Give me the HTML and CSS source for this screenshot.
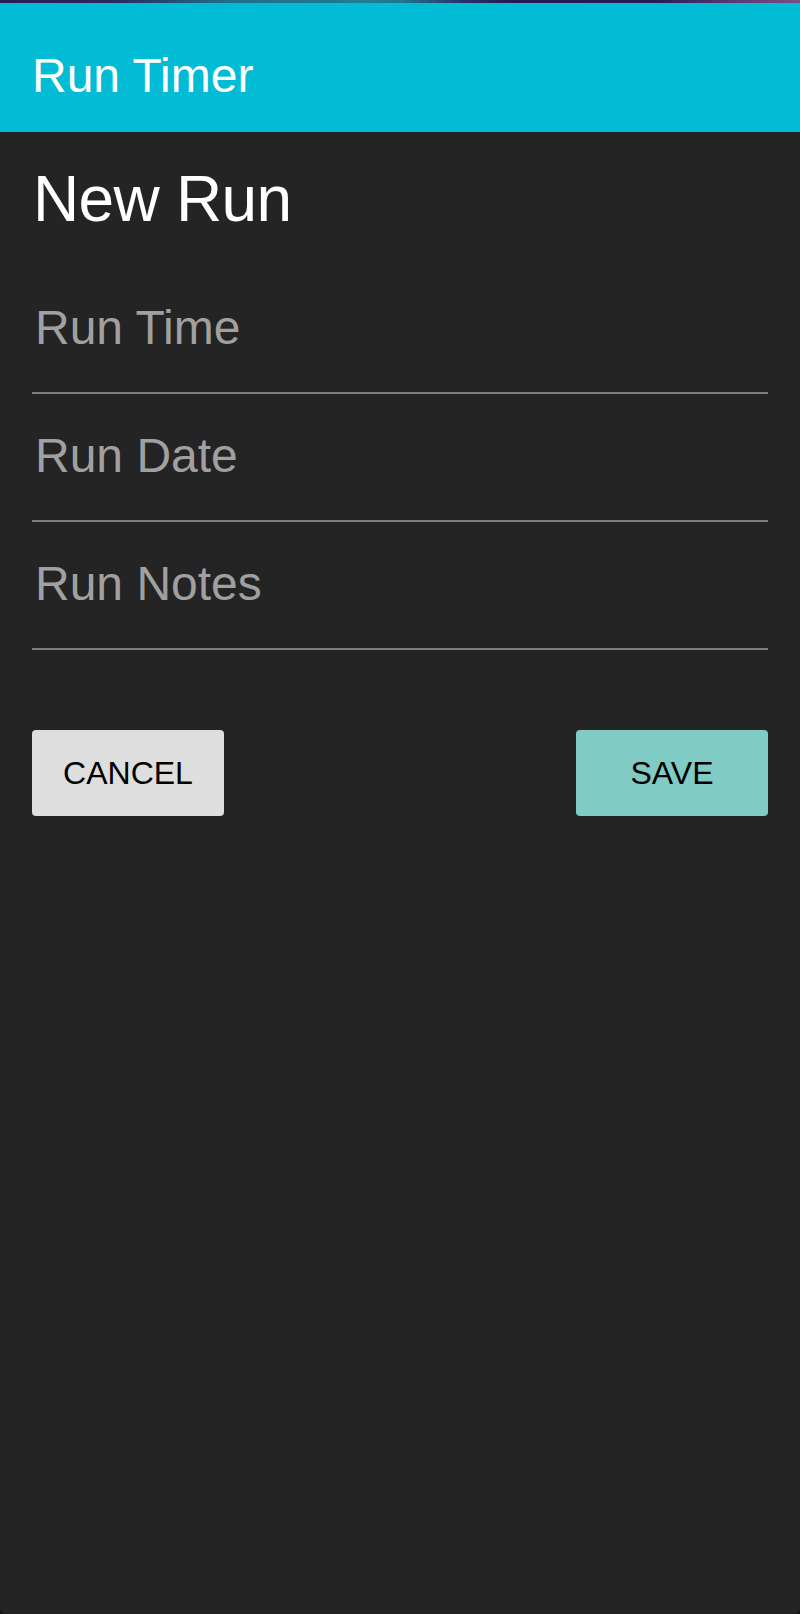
FILE: index.html
```html
<!DOCTYPE html>
<html lang="en">
<head>
<meta charset="utf-8">
<title>Run Timer</title>
<link rel="stylesheet" href="styles.css">
</head>
<body>
<div class="screen">
  <div class="status-strip"></div>
  <header class="toolbar">
    <div class="toolbar-title">Run Timer</div>
  </header>
  <main class="content">
    <h1 class="page-title">New Run</h1>
    <form class="run-form">
      <input class="field" type="text" placeholder="Run Time">
      <input class="field" type="text" placeholder="Run Date">
      <input class="field" type="text" placeholder="Run Notes">
      <div class="actions">
        <button type="button" class="btn btn-cancel">CANCEL</button>
        <button type="button" class="btn btn-save">SAVE</button>
      </div>
    </form>
  </main>
</div>
</body>
</html>
```
FILE: styles.css
```css
html, body {
  margin: 0;
  padding: 0;
  background: #15100e;
}
body {
  font-family: "Liberation Sans", Arial, Helvetica, sans-serif;
}
.screen {
  height: 1614px;
  background: #242424;
  border-radius: 0 0 6px 6px;
  overflow: hidden;
  display: flex;
  flex-direction: column;
}
.status-strip {
  height: 3px;
  flex: none;
  background: linear-gradient(to right, #2a1d56 0%, #28285c 14%, #1f6e8a 28%, #1f7b93 45%, #1f7890 50%, #25306a 58%, #231c54 64%, #261d56 82%, #5a3a75 92%, #7a5088 100%);
}
.toolbar {
  flex: none;
  height: 129px;
  box-sizing: border-box;
  padding: 45px 32px 0;
  background: #02bbd5;
}
.toolbar-title {
  color: #ffffff;
  font-size: 48px;
  line-height: 56px;
}
.content {
  padding: 0 32px;
}
.page-title {
  margin: 30px 0 30px 1px;
  font-size: 64px;
  line-height: 74px;
  font-weight: normal;
  letter-spacing: -0.7px;
  color: #ffffff;
}
.run-form {
  display: flex;
  flex-direction: column;
}
.field {
  display: block;
  width: 100%;
  height: 128px;
  box-sizing: border-box;
  margin: 0;
  padding: 0 0 4px 3px;
  border: none;
  border-bottom: 2px solid #7d7d7d;
  background: transparent;
  color: #ffffff;
  font-family: "Liberation Sans", Arial, Helvetica, sans-serif;
  font-size: 48px;
  outline: none;
}
.field::placeholder {
  color: #a0a0a0;
  opacity: 1;
}
.actions {
  display: flex;
  justify-content: space-between;
  margin-top: 80px;
}
.btn {
  width: 192px;
  height: 86px;
  border: none;
  border-radius: 4px;
  padding: 0;
  font-family: "Liberation Sans", Arial, Helvetica, sans-serif;
  font-size: 32px;
  color: #000000;
}
.btn-cancel {
  background: #dedede;
}
.btn-save {
  background: #80cbc4;
}
```
